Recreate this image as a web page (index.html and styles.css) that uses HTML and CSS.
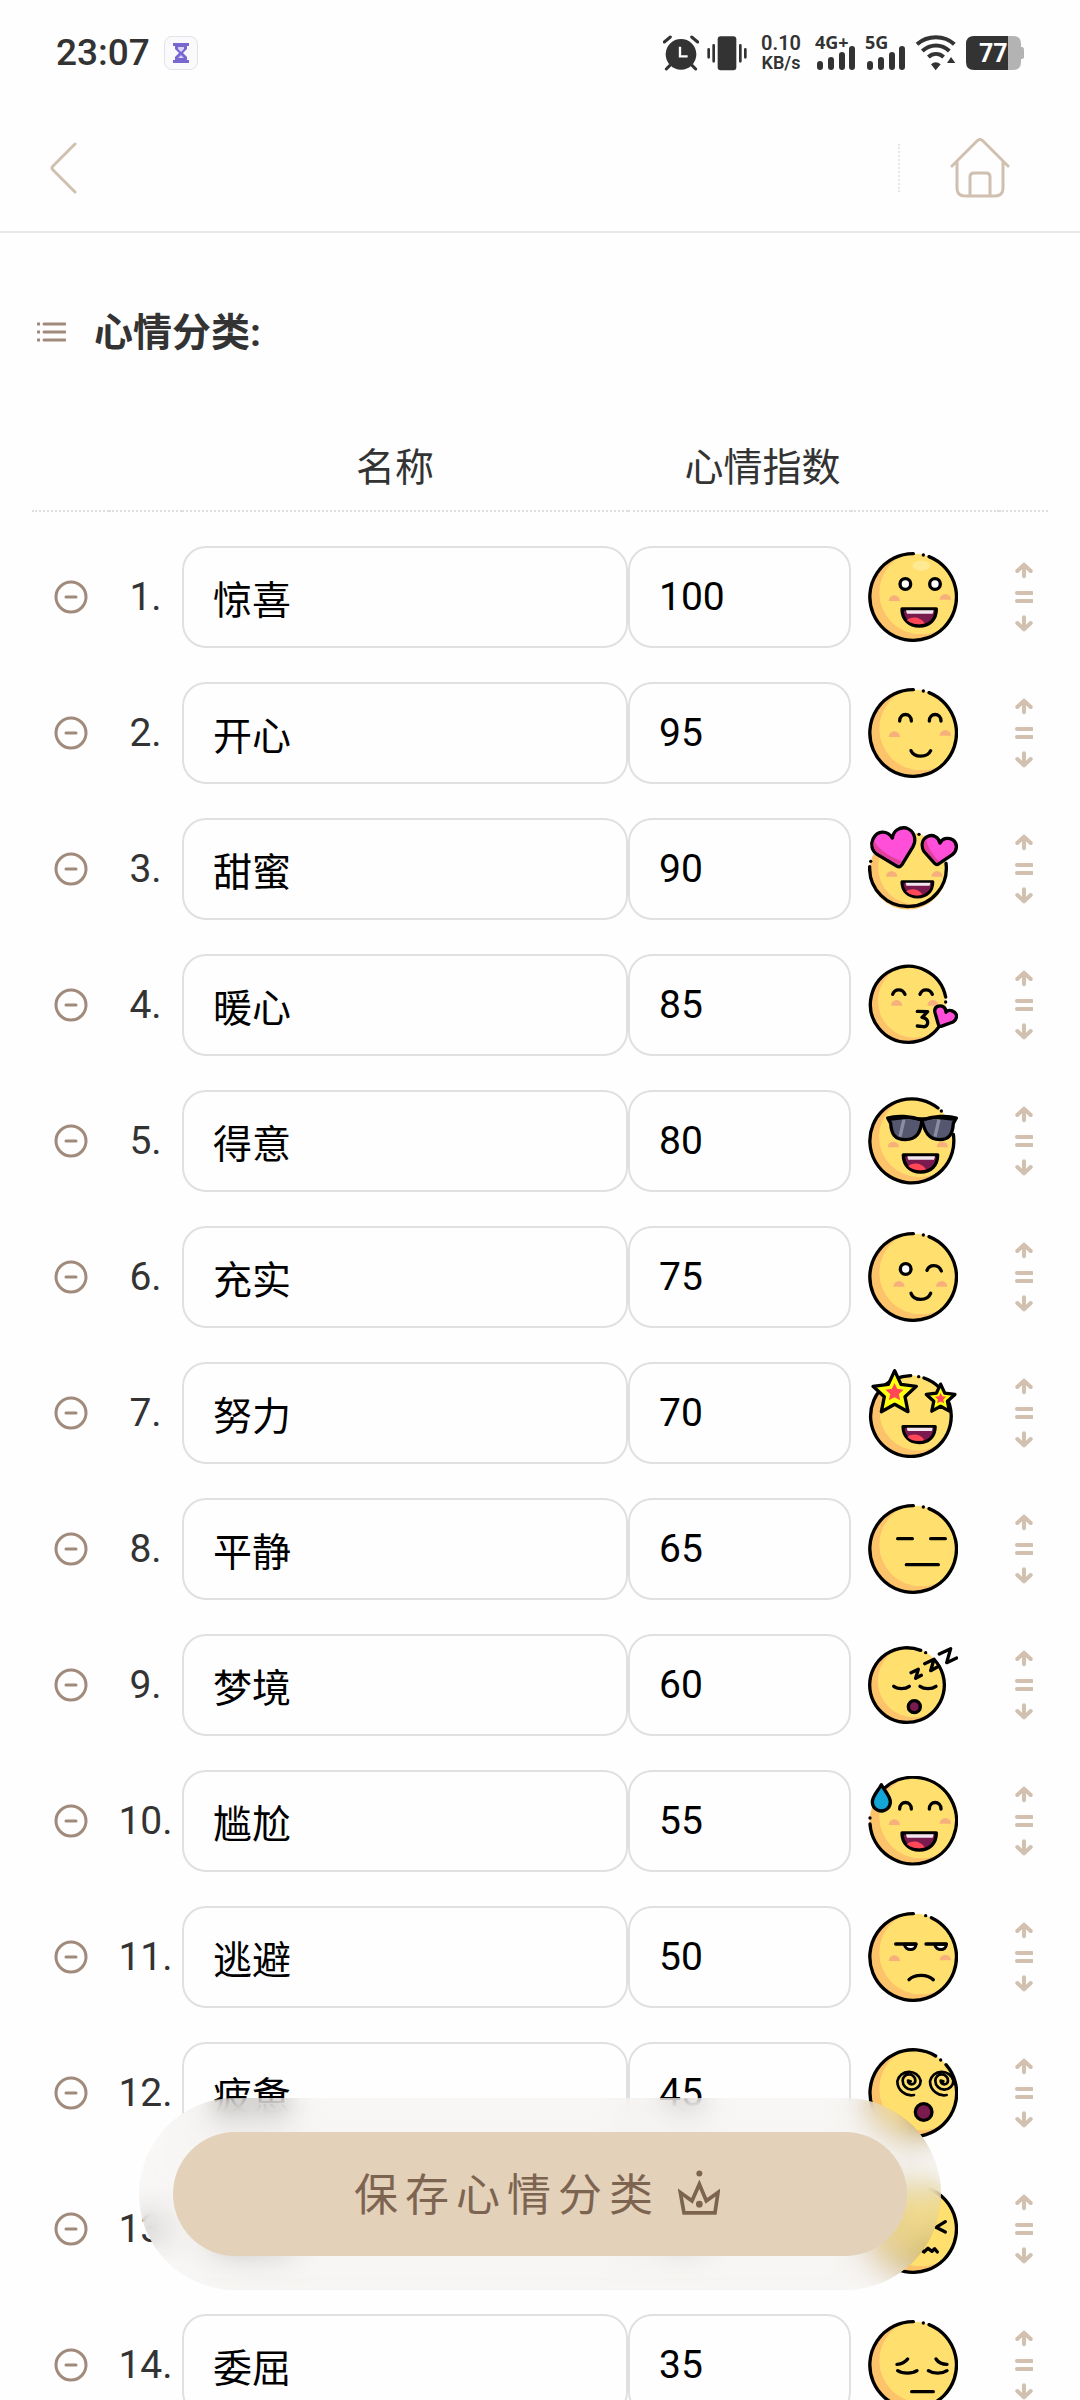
FILE: index.html
```html
<!DOCTYPE html>
<html lang="zh-CN">
<head>
    <meta charset="UTF-8">
    <meta name="viewport" content="width=device-width, initial-scale=1.0">
    <title>心情分类</title>
    <link rel="stylesheet" href="styles.css">
</head>
<body>
    <!-- 图标库 -->
    <svg class="sprite" aria-hidden="true">
        <defs>
            <clipPath id="round"><circle cx="135" cy="135" r="130"/></clipPath>
            <g id="skin" stroke="none">
                <circle cx="135" cy="135" r="130" fill="#fdc36b"/>
                <circle cx="159" cy="122" r="125" fill="#ffe06f" clip-path="url(#round)"/>
            </g>
            <g id="ring">
                <path d="M183 14A130 130 0 1 1 136 5"/>
                <circle class="ink" cx="166" cy="9" r="5"/>
            </g>
            <path id="cheek" class="cheek" d="M-17 8a17 17 0 0 1 34 0z"/>
            <g id="smile-eyes">
                <path d="M95 99C95 73 130 73 130 99M184 99C184 73 219 73 219 99"/>
            </g>
            <g id="mouth">
                <path d="M102 171H205C205 203 184 222 154 222S102 203 102 171z" fill="#7a1a4f"/>
                <path class="tongue" d="M116 204C130 192 158 194 170 214C156 219 132 219 116 204z"/>
                <path class="teeth" d="M114 175H197L194 185H117z"/>
            </g>
            <path id="star" d="M80 8L99 49L145 55L111 86L120 131L80 109L40 131L49 86L15 55L61 49z"/>
            <path id="swirl" d="M138 141A42 42 0 0 1 88 100A36 36 0 0 1 158 98A27 27 0 0 1 104 98A19 19 0 0 1 142 98A11 11 0 0 1 120 98L128 100"/>
        </defs>

        <symbol id="face-1" viewBox="0 0 270 270">
            <use href="#skin"/><use href="#ring"/>
            <ellipse cx="160" cy="41" rx="26" ry="15" fill="#ffe993" stroke="none"/>
            <circle cx="112" cy="96" r="16" fill="#fff"/><circle cx="201" cy="96" r="16" fill="#fff"/>
            <use href="#cheek" x="79" y="139"/><use href="#cheek" x="232" y="135"/>
            <use href="#mouth"/>
        </symbol>
        <symbol id="face-2" viewBox="0 0 270 270">
            <use href="#skin"/><use href="#ring"/><use href="#smile-eyes"/>
            <use href="#cheek" x="79" y="139"/><use href="#cheek" x="232" y="135"/>
            <path d="M129 188C138 210 178 210 188 188"/>
        </symbol>
        <symbol id="face-3" viewBox="0 0 270 270">
            <use href="#skin" transform="translate(0 21) scale(.89)"/>
            <path d="M234 118A115 115 0 1 1 5 128"/>
            <circle class="ink" cx="8" cy="112" r="5"/><circle class="ink" cx="153" cy="31" r="5"/>
            <use href="#cheek" x="71" y="150"/><use href="#cheek" x="207" y="150"/>
            <use href="#mouth" transform="translate(10 19) scale(.9)"/>
            <path fill="#ff4fd8" d="M73 42C58 18 28 18 15 45C7 62 12 80 26 90L86 126C93 130 98 128 102 122L135 68C147 45 138 20 115 12C95 8 76 20 73 42z"/>
            <path class="shade" d="M18 50C14 64 18 78 30 86L86 120C92 122 95 121 98 116L101 111C70 100 34 80 18 50z"/>
            <path fill="#ff4fd8" d="M216 57C212 40 195 30 180 37C162 45 158 65 168 82L200 118C204 122 209 122 213 119L253 92C268 80 270 58 254 47C238 39 222 44 216 57z"/>
            <path class="shade" d="M175 45C166 54 164 68 173 80L202 112C206 116 208 116 214 112C196 96 178 70 175 45z"/>
        </symbol>
        <symbol id="face-4" viewBox="0 0 270 270">
            <use href="#skin" transform="translate(0 16) scale(.88)"/>
            <path d="M212 202A114 114 0 1 1 233 111"/>
            <circle class="ink" cx="233" cy="126" r="5"/>
            <path d="M74 103C80 85 104 85 111 103M156 103C162 85 186 85 193 103"/>
            <use href="#cheek" x="86" y="129"/><use href="#cheek" x="195" y="129"/>
            <path d="M148 154L179 155L162 172C187 176 181 203 166 200L148 198"/>
            <path fill="#ff4fd8" d="M234 157C234 142 222 134 209 139C200 143 199 150 201 158L211 193C212 199 215 200 219 199L255 186C267 179 269 165 260 157C250 149 238 149 234 157z"/>
        </symbol>
        <symbol id="face-5" viewBox="0 0 270 270">
            <use href="#skin" transform="translate(0 4) scale(.97)"/>
            <path d="M256 115A126 126 0 1 1 210 36"/>
            <circle class="ink" cx="220" cy="45" r="5"/>
            <use href="#cheek" x="76" y="146"/><use href="#cheek" x="223" y="146"/>
            <use href="#mouth" transform="translate(4 6)"/>
            <path fill="#55566f" d="M59 66C85 58 130 60 162 72C158 112 145 130 112 131C80 131 70 114 68 82z"/>
            <path fill="#55566f" d="M162 72C194 60 239 58 265 66L256 82C254 114 244 131 215 131C182 130 170 108 162 72z"/>
            <path d="M96 122L108 70M201 122L213 70" stroke="#8c8da3" stroke-linecap="butt"/>
            <path class="ink" d="M59 64H265L256 74L200 68L162 76L120 68L68 74z"/>
        </symbol>
        <symbol id="face-6" viewBox="0 0 270 270">
            <use href="#skin"/><use href="#ring"/>
            <circle cx="113" cy="111" r="16" fill="#fff"/>
            <path d="M177 115C184 96 212 96 220 117"/>
            <use href="#cheek" x="93" y="156"/><use href="#cheek" x="221" y="156"/>
            <path d="M129 184C138 208 178 208 188 184"/>
        </symbol>
        <symbol id="face-7" viewBox="0 0 270 270">
            <use href="#skin" transform="translate(3 18) scale(.93)"/>
            <path d="M168 30A121 121 0 1 1 104 26L128 23"/>
            <circle class="ink" cx="152" cy="26" r="5"/>
            <use href="#mouth" transform="translate(9 15) scale(.94)"/>
            <use href="#star" fill="#ffff12"/>
            <use href="#star" class="star-core" transform="translate(46 42) scale(.42)"/>
            <use href="#star" fill="#ffff12" stroke-width="15" transform="translate(165 43) scale(.66)"/>
            <use href="#star" class="star-core" transform="translate(197 72) scale(.26)"/>
        </symbol>
        <symbol id="face-8" viewBox="0 0 270 270">
            <use href="#skin"/><use href="#ring"/>
            <path d="M89 104H133M188 104H232M115 182H211"/>
        </symbol>
        <symbol id="face-9" viewBox="0 0 270 270">
            <use href="#skin" transform="translate(0 18) scale(.865)"/>
            <path d="M200 60A112 112 0 1 1 158 31"/>
            <circle class="ink" cx="173" cy="38" r="5"/>
            <path d="M214 42L248 26L236 68L266 54M170 71L198 58L188 92L212 79M129 98L151 88L143 115L160 106"/>
            <path d="M77 139C88 148 112 148 124 139M156 139C168 148 192 148 204 139"/>
            <circle cx="139" cy="200" r="18" fill="#7a1a4f"/>
        </symbol>
        <symbol id="face-10" viewBox="0 0 270 270">
            <use href="#skin"/>
            <path d="M50 36A130 130 0 1 1 6 144"/>
            <circle class="ink" cx="6" cy="126" r="5"/>
            <use href="#smile-eyes"/>
            <use href="#cheek" x="79" y="139"/><use href="#cheek" x="232" y="135"/>
            <use href="#mouth"/>
            <path fill="#12a5d6" d="M40 26C50 45 67 60 67 78A27 27 0 0 1 13 78C13 60 30 45 40 26z"/>
        </symbol>
        <symbol id="face-11" viewBox="0 0 270 270">
            <use href="#skin"/>
            <path d="M190 17A130 130 0 1 1 136 5"/>
            <circle class="ink" cx="173" cy="11" r="5"/>
            <path d="M109 97H144C144 118 112 118 109 97zM200 97H235C235 118 203 118 200 97z" fill="#fff" stroke-width="9"/>
            <path d="M83 96H144M174 96H235M123 203C140 186 178 186 196 203"/>
            <use href="#cheek" x="79" y="139"/><use href="#cheek" x="232" y="137"/>
        </symbol>
        <symbol id="face-12" viewBox="0 0 270 270">
            <use href="#skin"/>
            <path d="M234 50A130 130 0 1 1 203 24"/>
            <circle class="ink" cx="218" cy="36" r="5"/>
            <g stroke-width="8"><use href="#swirl"/><use href="#swirl" x="98"/></g>
            <circle cx="167" cy="192" r="25" fill="#7a1a4f"/>
        </symbol>
        <symbol id="face-13" viewBox="0 0 270 270">
            <use href="#skin"/><use href="#ring"/>
            <path d="M90 113L118 130L90 144M232 113L204 130L232 144"/>
            <path d="M112 204L126 193L140 204L154 193L168 204L180 193L192 202L200 194L208 204"/>
        </symbol>
        <symbol id="face-14" viewBox="0 0 270 270">
            <use href="#skin"/><use href="#ring"/>
            <path d="M87 133C100 132 112 126 119 117M204 117C210 126 224 133 237 133"/>
            <path d="M89 152C104 162 132 162 147 152M181 152C196 162 222 162 237 152M131 215H196"/>
        </symbol>

        <symbol id="minus" viewBox="0 0 34 34">
            <circle cx="17" cy="17" r="15"/><path d="M12 17H22"/>
        </symbol>
        <symbol id="sort" viewBox="0 0 54 210">
            <path d="M27 8V43M7 27L27 8L47 27M6 93H50M6 117H50M27 166V200M7 183L27 202L47 183"/>
        </symbol>
    </svg>

    <div class="page">
        <div class="status-bar">
            <div class="status-left">
                <span class="clock">23:07</span>
                <span class="app-badge">
                    <svg width="18" height="22" viewBox="0 0 18 22"><path d="M1 1H17V4H15V7L11 11L15 15V18H17V21H1V18H3V15L7 11L3 7V4H1z" fill="#7767cf"/><path d="M6 5H12V7L9 10L6 7zM9 13L12 16H6z" fill="#d9d3f8"/></svg>
                </span>
            </div>
            <div class="status-right">
                <svg class="alarm" width="36" height="36" viewBox="0 0 108 108">
                    <path d="M4 21L22 6M86 6L104 21M20 92L10 102M88 92L98 102" stroke="#333" stroke-width="9" stroke-linecap="round"/>
                    <circle cx="54" cy="58" r="46" fill="#333"/>
                    <path d="M51 35V64H74" fill="none" stroke="#fff" stroke-width="7"/>
                </svg>
                <svg class="vibrate" width="40" height="36" viewBox="0 0 120 108">
                    <rect x="32" y="4" width="56" height="102" rx="9" fill="#333"/>
                    <path d="M5 43V67M20 31V79M100 31V79M115 43V67" stroke="#333" stroke-width="8" stroke-linecap="round"/>
                </svg>
                <span class="net-speed"><b>0.10</b><b>KB/s</b></span>
                <svg class="signal" width="42" height="44" viewBox="0 0 42 44">
                    <text x="0" y="18">4G+</text>
                    <path d="M5 33V36M16 29V36M27 24V36M37 18V36"/>
                </svg>
                <svg class="signal" width="42" height="44" viewBox="0 0 42 44">
                    <text x="0" y="18">5G</text>
                    <path d="M5 33V36M16 29V36M27 24V36M37 18V36"/>
                </svg>
                <svg class="wifi" width="42" height="36" viewBox="0 0 126 108">
                    <path d="M6 28C38 0 88 0 118 28M22 48C46 26 80 26 103 48M40 66C54 54 72 54 86 66" fill="none" stroke="#333" stroke-width="12"/>
                    <path d="M48 88Q62 76 77 88L62 106zM108 66L121 84H96z" fill="#333"/>
                </svg>
                <svg class="battery" width="59" height="36" viewBox="0 0 59 36">
                    <path d="M42 1H48Q56 1 56 9V12H57Q59 12 59 15V22Q59 24 57 24H56V27Q56 35 48 35H42z" fill="#b3b3b3"/>
                    <path d="M9 1H43V35H9Q1 35 1 27V9Q1 1 9 1z" fill="#333"/>
                    <text x="14" y="27">77</text>
                </svg>
            </div>
        </div>

        <header class="nav-bar">
            <a href="#" class="back-btn" aria-label="返回">
                <svg width="27" height="52" viewBox="0 0 27 52"><path d="M25 2L3 24Q1 26 3 28L25 50"/></svg>
            </a>
            <a href="#" class="home-btn" aria-label="首页">
                <svg width="60" height="60" viewBox="0 0 60 60">
                    <path d="M2 28L27 3Q30 0 33 3L58 28M7 24V50Q7 58 15 58H45Q53 58 53 50V24M20 58V39Q20 35 24 35H36Q40 35 40 39V58"/>
                </svg>
            </a>
        </header>

        <main class="content">
            <h1 class="section-title">
                <svg width="30" height="22" viewBox="0 0 30 22"><path d="M8 3H29M8 11H29M8 19H29"/><path class="dots" d="M1 3H4M1 11H4M1 19H4"/></svg>
                心情分类:
            </h1>

            <table class="mood-table">
                <colgroup>
                    <col class="col-del"><col class="col-no"><col class="col-name"><col class="col-score"><col class="col-face"><col class="col-sort">
                </colgroup>
                <thead>
                    <tr>
                        <th></th>
                        <th></th>
                        <th class="th-name">名称</th>
                        <th class="th-score">心情指数</th>
                        <th></th>
                        <th></th>
                    </tr>
                </thead>
                <tbody>
                    <tr>
                        <td><button class="del-btn" aria-label="删除"><svg><use href="#minus"/></svg></button></td>
                        <td class="no">1.</td>
                        <td><input class="field" type="text" aria-label="名称" value="惊喜"></td>
                        <td><input class="field score" type="text" aria-label="心情指数" value="100"></td>
                        <td><svg class="face"><use href="#face-1"/></svg></td>
                        <td><svg class="sort"><use href="#sort"/></svg></td>
                    </tr>
                    <tr>
                        <td><button class="del-btn" aria-label="删除"><svg><use href="#minus"/></svg></button></td>
                        <td class="no">2.</td>
                        <td><input class="field" type="text" aria-label="名称" value="开心"></td>
                        <td><input class="field score" type="text" aria-label="心情指数" value="95"></td>
                        <td><svg class="face"><use href="#face-2"/></svg></td>
                        <td><svg class="sort"><use href="#sort"/></svg></td>
                    </tr>
                    <tr>
                        <td><button class="del-btn" aria-label="删除"><svg><use href="#minus"/></svg></button></td>
                        <td class="no">3.</td>
                        <td><input class="field" type="text" aria-label="名称" value="甜蜜"></td>
                        <td><input class="field score" type="text" aria-label="心情指数" value="90"></td>
                        <td><svg class="face"><use href="#face-3"/></svg></td>
                        <td><svg class="sort"><use href="#sort"/></svg></td>
                    </tr>
                    <tr>
                        <td><button class="del-btn" aria-label="删除"><svg><use href="#minus"/></svg></button></td>
                        <td class="no">4.</td>
                        <td><input class="field" type="text" aria-label="名称" value="暖心"></td>
                        <td><input class="field score" type="text" aria-label="心情指数" value="85"></td>
                        <td><svg class="face"><use href="#face-4"/></svg></td>
                        <td><svg class="sort"><use href="#sort"/></svg></td>
                    </tr>
                    <tr>
                        <td><button class="del-btn" aria-label="删除"><svg><use href="#minus"/></svg></button></td>
                        <td class="no">5.</td>
                        <td><input class="field" type="text" aria-label="名称" value="得意"></td>
                        <td><input class="field score" type="text" aria-label="心情指数" value="80"></td>
                        <td><svg class="face"><use href="#face-5"/></svg></td>
                        <td><svg class="sort"><use href="#sort"/></svg></td>
                    </tr>
                    <tr>
                        <td><button class="del-btn" aria-label="删除"><svg><use href="#minus"/></svg></button></td>
                        <td class="no">6.</td>
                        <td><input class="field" type="text" aria-label="名称" value="充实"></td>
                        <td><input class="field score" type="text" aria-label="心情指数" value="75"></td>
                        <td><svg class="face"><use href="#face-6"/></svg></td>
                        <td><svg class="sort"><use href="#sort"/></svg></td>
                    </tr>
                    <tr>
                        <td><button class="del-btn" aria-label="删除"><svg><use href="#minus"/></svg></button></td>
                        <td class="no">7.</td>
                        <td><input class="field" type="text" aria-label="名称" value="努力"></td>
                        <td><input class="field score" type="text" aria-label="心情指数" value="70"></td>
                        <td><svg class="face"><use href="#face-7"/></svg></td>
                        <td><svg class="sort"><use href="#sort"/></svg></td>
                    </tr>
                    <tr>
                        <td><button class="del-btn" aria-label="删除"><svg><use href="#minus"/></svg></button></td>
                        <td class="no">8.</td>
                        <td><input class="field" type="text" aria-label="名称" value="平静"></td>
                        <td><input class="field score" type="text" aria-label="心情指数" value="65"></td>
                        <td><svg class="face"><use href="#face-8"/></svg></td>
                        <td><svg class="sort"><use href="#sort"/></svg></td>
                    </tr>
                    <tr>
                        <td><button class="del-btn" aria-label="删除"><svg><use href="#minus"/></svg></button></td>
                        <td class="no">9.</td>
                        <td><input class="field" type="text" aria-label="名称" value="梦境"></td>
                        <td><input class="field score" type="text" aria-label="心情指数" value="60"></td>
                        <td><svg class="face"><use href="#face-9"/></svg></td>
                        <td><svg class="sort"><use href="#sort"/></svg></td>
                    </tr>
                    <tr>
                        <td><button class="del-btn" aria-label="删除"><svg><use href="#minus"/></svg></button></td>
                        <td class="no">10.</td>
                        <td><input class="field" type="text" aria-label="名称" value="尴尬"></td>
                        <td><input class="field score" type="text" aria-label="心情指数" value="55"></td>
                        <td><svg class="face"><use href="#face-10"/></svg></td>
                        <td><svg class="sort"><use href="#sort"/></svg></td>
                    </tr>
                    <tr>
                        <td><button class="del-btn" aria-label="删除"><svg><use href="#minus"/></svg></button></td>
                        <td class="no">11.</td>
                        <td><input class="field" type="text" aria-label="名称" value="逃避"></td>
                        <td><input class="field score" type="text" aria-label="心情指数" value="50"></td>
                        <td><svg class="face"><use href="#face-11"/></svg></td>
                        <td><svg class="sort"><use href="#sort"/></svg></td>
                    </tr>
                    <tr>
                        <td><button class="del-btn" aria-label="删除"><svg><use href="#minus"/></svg></button></td>
                        <td class="no">12.</td>
                        <td><input class="field" type="text" aria-label="名称" value="疲惫"></td>
                        <td><input class="field score" type="text" aria-label="心情指数" value="45"></td>
                        <td><svg class="face"><use href="#face-12"/></svg></td>
                        <td><svg class="sort"><use href="#sort"/></svg></td>
                    </tr>
                    <tr>
                        <td><button class="del-btn" aria-label="删除"><svg><use href="#minus"/></svg></button></td>
                        <td class="no">13.</td>
                        <td><input class="field" type="text" aria-label="名称" value="难过"></td>
                        <td><input class="field score" type="text" aria-label="心情指数" value="40"></td>
                        <td><svg class="face"><use href="#face-13"/></svg></td>
                        <td><svg class="sort"><use href="#sort"/></svg></td>
                    </tr>
                    <tr>
                        <td><button class="del-btn" aria-label="删除"><svg><use href="#minus"/></svg></button></td>
                        <td class="no">14.</td>
                        <td><input class="field" type="text" aria-label="名称" value="委屈"></td>
                        <td><input class="field score" type="text" aria-label="心情指数" value="35"></td>
                        <td><svg class="face"><use href="#face-14"/></svg></td>
                        <td><svg class="sort"><use href="#sort"/></svg></td>
                    </tr>
                </tbody>
            </table>
        </main>
    </div>

    <!-- 底部悬浮保存按钮 -->
    <div class="save-bar">
        <button class="save-btn">
            <span>保存心情分类</span>
            <svg width="42" height="45" viewBox="0 0 126 134">
                <path d="M7 67L42 92L64 42L85 92L120 67L111 128H18z" fill="none" stroke="#7d6450" stroke-width="11"/>
                <circle cx="64" cy="10" r="9" fill="#7d6450"/><circle cx="64" cy="102" r="10" fill="#7d6450"/>
            </svg>
        </button>
    </div>
</body>
</html>
```
FILE: styles.css
```css
* {
    margin: 0;
    padding: 0;
    box-sizing: border-box;
}

body {
    font-family: Roboto, "Noto Sans CJK SC", sans-serif;
    font-size: 39px;
    color: #333;
    background: #fefefe;
}

svg {
    display: block;
}

button {
    border: none;
    background: none;
    font-family: inherit;
    cursor: pointer;
}

.sprite {
    position: absolute;
    width: 0;
    height: 0;
}

.page {
    height: 100vh;
    display: flex;
    flex-direction: column;
    overflow: hidden;
    background: #fefefe;
}

/* 状态栏 */
.status-bar {
    display: flex;
    justify-content: space-between;
    align-items: center;
    height: 105px;
    padding: 0 56px;
}

.status-left,
.status-right {
    display: flex;
    align-items: center;
}

.status-left {
    gap: 14px;
}

.status-right {
    gap: 8px;
}

.clock {
    font-size: 37px;
    font-weight: 500;
}

.app-badge {
    display: flex;
    align-items: center;
    justify-content: center;
    width: 34px;
    height: 34px;
    border: 1px solid #e3e3e6;
    border-radius: 8px;
    background: #faf9fc;
}

.net-speed {
    display: flex;
    flex-direction: column;
    align-items: center;
    width: 52px;
    font-size: 18px;
    line-height: 19px;
}

.net-speed b {
    font-weight: 600;
}

.net-speed b:first-child {
    font-size: 20px;
}

.signal {
    fill: none;
    stroke: #333;
    stroke-width: 6px;
    stroke-linecap: round;
}

.signal text {
    font-family: "Open Sans", sans-serif;
    font-size: 18px;
    font-weight: 700;
    fill: #333;
    stroke: none;
}

.battery text {
    font-size: 25px;
    font-weight: 700;
    fill: #fff;
}

/* 导航栏 */
.nav-bar {
    display: flex;
    justify-content: space-between;
    align-items: center;
    height: 128px;
    padding: 0 70px 0 50px;
    border-bottom: 2px solid #e9e9e9;
}

.nav-bar svg {
    fill: none;
    stroke: #cfc0b0;
    stroke-width: 3px;
    stroke-linecap: round;
}

.home-btn {
    display: flex;
    align-items: center;
    height: 48px;
    padding-left: 50px;
    border-left: 2px dotted #e6e6e6;
}

/* 内容 */
.content {
    flex: 1;
    min-height: 0;
    padding: 66px 32px 0;
    overflow-y: auto;
    scrollbar-width: none;
}

.section-title {
    display: flex;
    align-items: center;
    gap: 28px;
    height: 60px;
    margin-bottom: 60px;
    padding-left: 4px;
    font-size: 39px;
    font-weight: 700;
}

.section-title svg {
    margin-top: 6px;
    stroke: #a08a7b;
    stroke-width: 3px;
    stroke-linecap: round;
}

.section-title .dots {
    stroke-linecap: butt;
}

.mood-table {
    width: 100%;
    table-layout: fixed;
    border-collapse: collapse;
}

.col-del {
    width: 77px;
}

.col-no {
    width: 73px;
}

.col-score {
    width: 223px;
}

.col-face {
    width: 148px;
}

.col-sort {
    width: 49px;
}

.mood-table thead tr {
    border-bottom: 2px dotted #dedede;
}

.mood-table th {
    height: 92px;
    padding-bottom: 2px;
    font-weight: 400;
    white-space: nowrap;
}

.mood-table .th-name {
    padding-right: 20px;
}

.mood-table .th-score {
    padding-left: 46px;
}

.mood-table td {
    padding-top: 34px;
    vertical-align: middle;
}

.mood-table .no {
    text-align: center;
    white-space: nowrap;
}

.del-btn {
    display: block;
    margin: 0 auto;
}

.del-btn svg {
    width: 34px;
    height: 34px;
    fill: none;
    stroke: #a08a7b;
    stroke-width: 3px;
    stroke-linecap: round;
}

.field {
    display: block;
    width: 100%;
    height: 102px;
    padding: 0 29px;
    border: 2px solid #dfe0e2;
    border-radius: 24px;
    background: #fefefe;
    color: #000;
    font-family: inherit;
    font-size: 39px;
    outline: none;
}

.face {
    width: 90px;
    height: 90px;
    margin-left: 17px;
    overflow: visible;
    fill: none;
    stroke: #000;
    stroke-width: 10px;
    stroke-linecap: round;
    stroke-linejoin: round;
}

.ink {
    fill: #000;
    stroke: none;
}

.cheek {
    fill: #f7b07c;
    stroke: none;
}

.tongue {
    fill: #ff4757;
    stroke: none;
}

.teeth {
    fill: #f3e6ee;
    stroke: none;
}

.shade {
    fill: #e0409a;
    stroke: none;
}

.star-core {
    fill: #ff4757;
    stroke: none;
}

.sort {
    width: 18px;
    height: 70px;
    margin: 0 auto;
    fill: none;
    stroke: #d2c0b0;
    stroke-width: 12px;
    stroke-linecap: round;
    stroke-linejoin: round;
}

/* 保存按钮 */
.save-bar {
    position: fixed;
    z-index: 10;
    left: 0;
    right: 0;
    bottom: 110px;
    width: fit-content;
    margin: 0 auto;
    padding: 34px;
    border-radius: 96px;
    overflow: hidden;
}

/* 毛玻璃分两层叠加，边缘处也能完全模糊 */
.save-bar::before,
.save-bar::after {
    content: "";
    position: absolute;
    z-index: -1;
    inset: -60px;
    background: rgba(238, 232, 224, 0.16);
    backdrop-filter: blur(12px);
}

.save-btn {
    display: flex;
    align-items: center;
    justify-content: center;
    gap: 18px;
    width: 68vw;
    height: 124px;
    padding: 0 6px 4px 0;
    border-radius: 62px;
    background: #e3d1ba;
    color: #7d6450;
    font-size: 44px;
    letter-spacing: 7px;
}
```
